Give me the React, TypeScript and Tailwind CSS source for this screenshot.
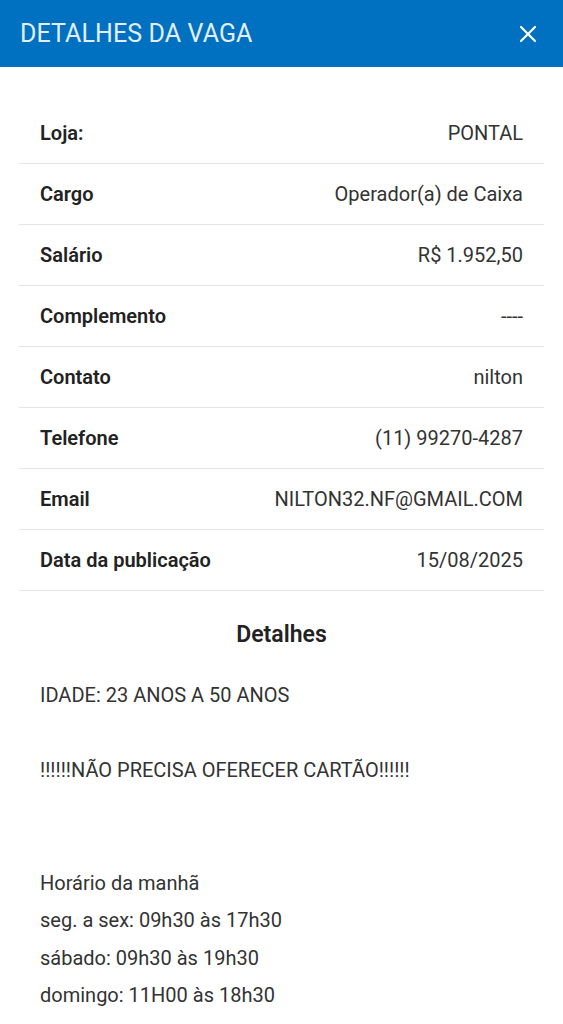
const rows: [string, string][] = [
  ['Loja:', 'PONTAL'],
  ['Cargo', 'Operador(a) de Caixa'],
  ['Salário', 'R$ 1.952,50'],
  ['Complemento', '----'],
  ['Contato', 'nilton'],
  ['Telefone', '(11) 99270-4287'],
  ['Email', 'NILTON32.NF@GMAIL.COM'],
  ['Data da publicação', '15/08/2025'],
]

const details = [
  'IDADE: 23 ANOS A 50 ANOS',
  '',
  '!!!!!!NÃO PRECISA OFERECER CARTÃO!!!!!!',
  '',
  '',
  'Horário da manhã',
  'seg. a sex: 09h30 às 17h30',
  'sábado: 09h30 às 19h30',
  'domingo: 11H00 às 18h30',
]

export default function App() {
  return (
    <div className="min-h-screen bg-white font-['Roboto',sans-serif] text-[#2b2b2b]">
      <header className="h-[67px] bg-[#0070c0] flex items-center justify-between pl-5 pr-[25px]">
        <h1 className="text-[25px] text-[#e2eefa] tracking-[0.1px]">DETALHES DA VAGA</h1>
        <button className="w-5 h-5 flex items-center justify-center">
          <svg width="18" height="18" viewBox="0 0 18 18" fill="none" stroke="#ffffff" strokeWidth="2.2" strokeLinecap="round">
            <line x1="2" y1="2" x2="16" y2="16" />
            <line x1="16" y1="2" x2="2" y2="16" />
          </svg>
        </button>
      </header>

      <div className="pt-[36px] px-[19px]">
        {rows.map(([label, value]) => (
          <div key={label} className="h-[61px] flex items-center justify-between px-[21px] border-b border-[#e4e4e4]">
            <span className="text-[20px] font-semibold text-[#222222]">{label}</span>
            <span className="text-[20px] text-[#333333]">{value}</span>
          </div>
        ))}

        <h2 className="text-center text-[23px] leading-[30px] font-semibold text-[#222222] mt-[29px]">Detalhes</h2>

        <div className="px-[21px] mt-[27px] text-[20px] text-[#333333] leading-[37.5px]">
          {details.map((line, i) => (
            <div key={i} className="h-[37.5px]">{line}</div>
          ))}
        </div>
      </div>
    </div>
  )
}
